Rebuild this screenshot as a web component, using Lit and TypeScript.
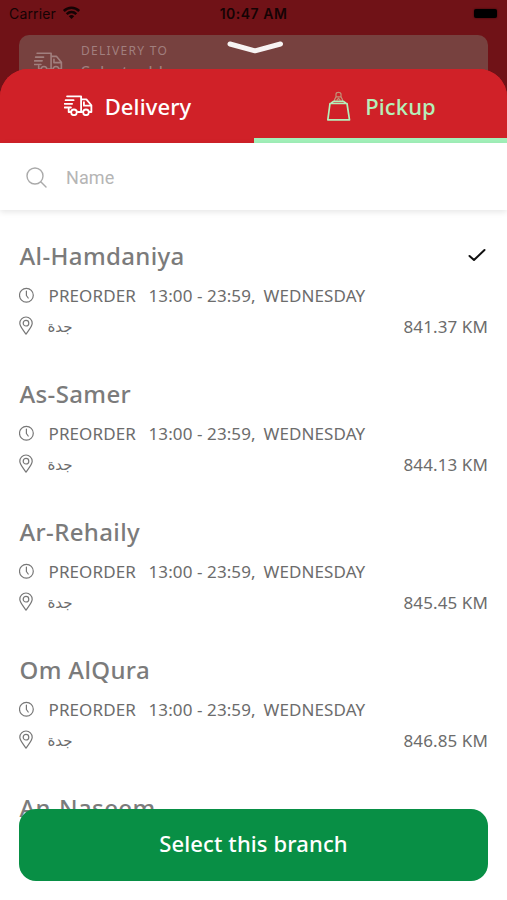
import { LitElement, html, css, svg } from "lit";
import { customElement, property } from "lit/decorators.js";

interface Branch {
  name: string;
  city?: string;
  km?: string;
  selected?: boolean;
}

const BRANCHES: Branch[] = [
  { name: "Al-Hamdaniya", city: "جدة", km: "841.37 KM", selected: true },
  { name: "As-Samer", city: "جدة", km: "844.13 KM" },
  { name: "Ar-Rehaily", city: "جدة", km: "845.45 KM" },
  { name: "Om AlQura", city: "جدة", km: "846.85 KM" },
  { name: "An-Naseem" },
];

const truck = svg`
  <path d="M3 1.2H16.8V16.6H13.6M16.8 4.2H22L26.9 10V16.6H25.2M17.8 16.6H13.6M6.2 16.6H4.6V13.8M1.6 5H9.4M.6 8.6H8M.6 12.2H6.8M19.6 7V10.4H26.6"/>
  <circle cx="9.8" cy="17" r="2.8"/><circle cx="21.6" cy="17" r="2.8"/>`;

@customElement("branch-item")
export class BranchItem extends LitElement {
  @property({ attribute: false }) branch!: Branch;

  static styles = css`
    :host { display: block; height: 138px; }
    .head, .line { display: flex; align-items: center; }
    .head { height: 36px; justify-content: space-between; }
    .name { font-size: 24px; font-weight: 500; color: #7b7b7b; letter-spacing: 0.36px; white-space: nowrap; }
    .check { width: 18px; height: 14px; margin: -1px 2px 0 0; }
    .line { height: 30px; font-size: 17px; color: #6c6c6c; white-space: pre; margin-left: -1px; }
    .hours { margin-top: 7px; letter-spacing: 0.1px; }
    .icon { width: 15px; height: 20px; margin-right: 15px; flex: none; }
    svg { fill: none; stroke: #777; stroke-width: 1.2; stroke-linecap: round; stroke-linejoin: round; }
    .check { stroke: #111; stroke-width: 2; }
    .status { width: 100px; }
    .time { width: 115px; }
    .city { font-family: "DejaVu Sans", sans-serif; font-size: 15px; flex: 1; padding-top: 4px; margin-left: -1px; }
    .km { letter-spacing: 0.1px; padding-top: 2px; }
  `;

  render() {
    const b = this.branch;
    return html`
      <div class="head">
        <span class="name">${b.name}</span>
        ${b.selected ? html`<svg class="check" viewBox="0 0 18 14"><path d="M1.5 8L6 12L16.5 2" /></svg>` : ""}
      </div>
      ${b.city ? html`
      <div class="line hours">
        <svg class="icon" viewBox="0 0 15 20"><circle cx="7.4" cy="10.2" r="6.9" /><path d="M7.4 6V10.5L9.2 13" /></svg>
        <span class="status">PREORDER</span><span class="time">13:00 - 23:59,</span><span>WEDNESDAY</span>
      </div>
      <div class="line">
        <svg class="icon" viewBox="0 0 15 20"><path d="M7 19.2C5 16 .8 11.5 .8 8.2A6.2 6.2 0 0 1 13.2 8.2C13.2 11.5 9 16 7 19.2Z" /><circle cx="7" cy="8.2" r="2.8" /></svg>
        <span class="city">${b.city}</span><span class="km">${b.km}</span>
      </div>` : ""}`;
  }
}

@customElement("app-root")
export class AppRoot extends LitElement {
  static styles = css`
    :host { display: block; position: relative; height: 900px; overflow: hidden; background: #701217; font-family: "Noto Sans", sans-serif; }
    svg { fill: none; stroke-linecap: round; stroke-linejoin: round; }
    .status { height: 35px; box-sizing: border-box; padding: 0 10px 8px 9px; display: grid; grid-template-columns: 1fr auto 1fr; align-items: center; font: 14px Inter, sans-serif; color: #150304; }
    .carrier { display: flex; align-items: center; gap: 6px; letter-spacing: 0.15px; }
    .wifi { width: 19px; height: 14px; margin-top: -1px; }
    .clock { font-weight: 600; letter-spacing: 0.5px; margin-left: 1px; }
    .battery { justify-self: end; width: 23px; height: 9px; border-radius: 2px; background: #000; box-shadow: 0 0 2px #300609; }
    .address { height: 60px; margin: 0 19px; border-radius: 10px; background: #77413f; color: #a17f7e; display: flex; box-sizing: border-box; padding: 6px 15px; }
    .address svg { width: 29px; height: 21px; margin-top: 11px; stroke: #a17f7e; stroke-width: 1.6; }
    .to { margin-left: 18px; font-size: 12px; line-height: 20px; letter-spacing: 1.3px; }
    .pick { font-size: 17px; line-height: 22px; letter-spacing: 0; }
    .handle { position: absolute; left: 226px; top: 39px; width: 58px; height: 17px; stroke: #f7f3f3; stroke-width: 5; }
    .sheet { position: absolute; inset: 69px 0 0; border-radius: 28px 28px 0 0; background: linear-gradient(#d02128 70px, #fff 70px); overflow: hidden; display: flex; flex-direction: column; }
    .tabs { height: 74px; display: grid; grid-template-columns: 254px 1fr; flex: none; background: #d02128; color: #fff; font-size: 22px; font-weight: 500; letter-spacing: 0.12px; }
    .tab { display: flex; align-items: center; justify-content: center; box-sizing: border-box; border-bottom: 5px solid transparent; padding: 4px 0 0 1px; }
    .tab.active { color: #b4f0ba; border-color: #a1f0b9; }
    .truck { width: 29px; height: 21px; margin-right: 12px; stroke: #fff; stroke-width: 1.8; }
    .bag { width: 25px; height: 31px; margin-right: 14px; stroke: #b4f0ba; stroke-width: 1.7; }
    .search { height: 67px; flex: none; box-sizing: border-box; padding: 2px 26px 0; display: flex; align-items: center; gap: 19px; background: #fff; color: #b5b5b5; font-size: 18px; letter-spacing: 0.1px; box-shadow: 0 2px 6px rgba(0,0,0,.1); font-family: Roboto, sans-serif; }
    .search svg { width: 21px; height: 21px; stroke: #aaa; stroke-width: 1.4; }
    .list { padding: 27px 19px 0 19.5px; }
    .select { position: absolute; left: 19px; right: 19px; bottom: 19px; height: 72px; border: 0; border-radius: 17px; background: #088f45; color: #fff; font: 500 22px "Noto Sans", sans-serif; letter-spacing: 0.12px; padding: 0 0 4px; }
  `;

  render() {
    return html`
      <div class="status">
        <span class="carrier">Carrier
          <svg class="wifi" viewBox="0 0 19 14" stroke="#150304" stroke-width="2.5"><path d="M1.8 5C6.2 .7 12.8 .7 17.2 5M4.7 8.2C7.5 5.4 11.5 5.4 14.3 8.2" stroke-linecap="butt" /><path d="M6.8 10.3Q9.5 7.9 12.2 10.3L9.5 13Z" fill="#150304" stroke="none" /></svg>
        </span>
        <span class="clock">10:47 AM</span>
        <span class="battery"></span>
      </div>
      <div class="address">
        <svg viewBox="0 0 28.5 20.5">${truck}</svg>
        <div class="to">DELIVERY TO<div class="pick">Select address</div></div>
      </div>
      <svg class="handle" viewBox="0 0 58 17"><path d="M4 5L29 11.8L54.5 5" /></svg>
      <div class="sheet">
        <div class="tabs">
          <div class="tab"><svg class="truck" viewBox="0 0 28.5 20.5">${truck}</svg>Delivery</div>
          <div class="tab active">
            <svg class="bag" viewBox="0 0 25 31"><path d="M4 13.5H21L23.5 29.8H1.8Z" /><path d="M5.5 13L7.5 11.3H17.5L19.5 13" /><path d="M8.5 10.5C8.5 8.5 10 8 10 6.5V4.3Q10 2.3 12.5 2.3T15 4.3V6.5C15 8 16.5 8.5 16.5 10.5M10 6.8H15M11 10L12.5 8.3L14 10" stroke-width="1.2" opacity=".55" /></svg>Pickup
          </div>
        </div>
        <div class="search"><svg viewBox="0 0 21 21"><circle cx="9" cy="9" r="8" /><path d="M15 15L20 20" /></svg><span>Name</span></div>
        <div class="list">${BRANCHES.map((b) => html`<branch-item .branch=${b}></branch-item>`)}</div>
        <button class="select">Select this branch</button>
      </div>`;
  }
}
